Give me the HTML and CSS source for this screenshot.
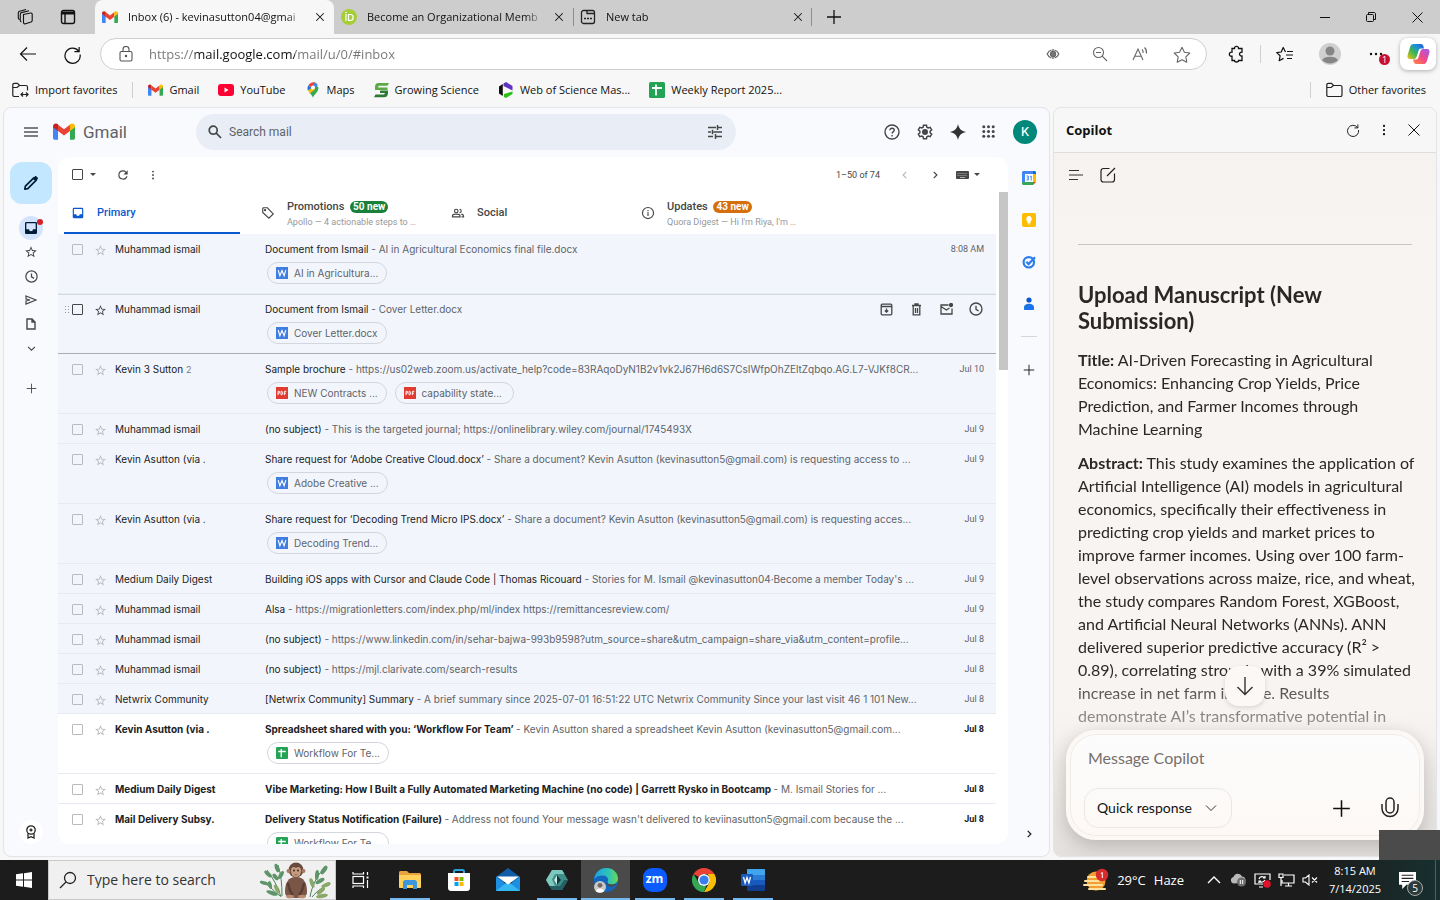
FILE: index.html
```
<!DOCTYPE html>
<html lang="en">
<head>
    <meta charset="UTF-8">
    <meta name="viewport" content="width=device-width, initial-scale=1.0">
    <title>Inbox (6) - Gmail</title>
    <link rel="stylesheet" href="styles.css">
</head>
<body>

    <!-- Shared icons -->
    <svg class="sprite" aria-hidden="true">
        <symbol id="i-gmail" viewBox="0 0 24 18">
            <path fill="#4285f4" d="M0 3v13.4C0 17.3.7 18 1.6 18h3.9V7.5z"/>
            <path fill="#34a853" d="M24 3v13.4c0 .9-.7 1.6-1.6 1.6h-3.9V7.5z"/>
            <path fill="#ea4335" d="M5.5 1.6 12 6.6l6.5-5v6.9L12 13.4 5.500 8.500z"/>
            <path fill="#c5221f" d="M0 3.500C0 .4 3.300-.6 5.500 1.200v7.300L0 4.300z"/>
            <path fill="#fbbc04" d="M24 3.500C24 .4 20.700-.6 18.500 1.200v7.300L24 4.300z"/>
        </symbol>
        <symbol id="i-close" viewBox="0 0 16 16"><path d="M3 3l10 10M13 3 3 13" fill="none" stroke="currentColor" stroke-width="1.4"/></symbol>
        <symbol id="i-plus" viewBox="0 0 16 16"><path d="M8 1v14M1 8h14" fill="none" stroke="currentColor" stroke-width="1.300"/></symbol>
        <symbol id="i-reload" viewBox="0 0 20 20"><path d="M16.500 6.500A8 8 0 1 0 18 10M17 2v5h-5" fill="none" stroke="currentColor" stroke-width="1.300"/></symbol>
        <symbol id="i-refresh" viewBox="0 0 24 24"><path fill="currentColor" d="M17.650 6.350A7.960 7.960 0 0 0 12 4a8 8 0 1 0 7.730 10h-2.080A6 6 0 1 1 12 6c1.660 0 3.140.69 4.220 1.780L13 11h7V4z"/></symbol>
        <symbol id="i-dots" viewBox="0 0 16 16"><g fill="currentColor"><circle cx="8" cy="2.500" r="1.500"/><circle cx="8" cy="8" r="1.500"/><circle cx="8" cy="13.500" r="1.500"/></g></symbol>
        <symbol id="i-star" viewBox="0 0 24 24"><path fill="currentColor" d="M22 9.240l-7.190-.62L12 2 9.190 8.630 2 9.240l5.460 4.730L5.820 21 12 17.270 18.180 21l-1.630-7.030zM12 15.400l-3.760 2.270 1-4.280-3.320-2.880 4.380-.38L12 6.100l1.710 4.040 4.380.38-3.320 2.880 1 4.280z"/></symbol>
        <symbol id="i-clock" viewBox="0 0 24 24"><path fill="none" stroke="currentColor" stroke-width="2" d="M12 3a9 9 0 1 0 0 18 9 9 0 0 0 0-18zM12 7v5.500l4 2.500"/></symbol>
        <symbol id="i-chev-r" viewBox="0 0 16 16"><path d="M6 3l5 5-5 5" fill="none" stroke="currentColor" stroke-width="2"/></symbol>
        <symbol id="i-chev-d" viewBox="0 0 16 16"><path d="M3 5.500l5 5 5-5" fill="none" stroke="currentColor" stroke-width="1.600"/></symbol>
        <symbol id="i-caret" viewBox="0 0 8 4"><path d="M0 0h8L4 4z" fill="currentColor"/></symbol>
        <symbol id="i-inbox" viewBox="0 0 24 24"><path fill="currentColor" d="M19 3H5a2 2 0 0 0-2 2v14c0 1.100.9 2 2 2h14a2 2 0 0 0 2-2V5a2 2 0 0 0-2-2zm0 11h-4a3 3 0 0 1-6 0H5V5h14z"/></symbol>
        <symbol id="i-word" viewBox="0 0 12 12"><path fill="#3f7de0" d="M0 0h12v12H0z"/><path fill="none" stroke="#fff" stroke-width="1.200" d="M2.200 3.200l1.700 5.600L6 3.600l2.100 5.200 1.700-5.600"/></symbol>
        <symbol id="i-pdf" viewBox="0 0 12 12"><path fill="#e03c31" d="M0 0h12v12H0z"/><path fill="none" stroke="#fff" stroke-width="0.900" d="M2 8.200V4.300h1.300v2H2M5 7.800V4.300h.9l.7.700v2l-.7.800zM8.400 8.200V4.300h2M8.400 6.200h1.600"/></symbol>
        <symbol id="i-sheet" viewBox="0 0 16 16"><rect width="16" height="16" rx="1.500" fill="#23a455"/><path d="M3 6h10M7 2.500v11" stroke="#fff" stroke-width="1.800"/></symbol>
    </svg>

    <!-- Tab strip -->
    <header class="tabs">
        <div class="tabs__tools">
            <button class="icon-btn" aria-label="Workspaces"><svg width="18" height="18" viewBox="0 0 18 18" fill="none" stroke="#111" stroke-width="1.100"><path d="M6.500 6.500l7-1.500c1-.2 1.700.4 1.700 1.300v6.200c0 .8-.4 1.200-1.200 1.500l-5.500 1.800c-1 .3-2-.2-2-1.200zM4.500 14c-.8-.2-1.200-.7-1.200-1.500V6.200c0-.8.500-1.300 1.300-1.600L12 2.800M2.500 11.500C1.800 11.300 1.300 10.800 1.300 10V4.800c0-.8.500-1.300 1.300-1.600L9 1.500"/></svg></button>
            <button class="icon-btn" aria-label="Tab actions"><svg width="16" height="16" viewBox="0 0 16 16" fill="none" stroke="#111" stroke-width="1.400"><rect x="1.500" y="1.500" width="13" height="13" rx="2"/><path d="M1.500 4h13" stroke-width="3"/><path d="M5 4v10"/></svg></button>
        </div>
        <div class="tab tab--active">
            <svg class="tab__icon" width="16" height="12"><use href="#i-gmail"/></svg>
            <span class="tab__title">Inbox (6) - kevinasutton04@gmai</span>
            <button class="icon-btn" aria-label="Close tab"><svg width="12" height="12"><use href="#i-close"/></svg></button>
        </div>
        <div class="tab">
            <svg class="tab__icon" width="16" height="16" viewBox="0 0 16 16"><circle cx="8" cy="8" r="8" fill="#a6ce39"/><path d="M5 5v7M7.500 5.500v6h1.700a3 3 0 0 0 0-6z" fill="none" stroke="#fff" stroke-width="1.200"/><circle cx="5" cy="3.500" r="0.800" fill="#fff"/></svg>
            <span class="tab__title">Become an Organizational Memb</span>
            <button class="icon-btn" aria-label="Close tab"><svg width="12" height="12"><use href="#i-close"/></svg></button>
        </div>
        <div class="tab tab--edged">
            <svg class="tab__icon" width="16" height="16" viewBox="0 0 16 16" fill="none" stroke="#222" stroke-width="1.300"><rect x="1.500" y="1.500" width="13" height="13" rx="2"/><path d="M7 1.500v3h7.500"/><path d="M4 9.500h2M7 9.500h2M10 9.500h2" stroke-width="1.600"/></svg>
            <span class="tab__title">New tab</span>
            <button class="icon-btn" aria-label="Close tab"><svg width="12" height="12"><use href="#i-close"/></svg></button>
        </div>
        <button class="icon-btn tabs__new" aria-label="New tab"><svg width="16" height="16"><use href="#i-plus"/></svg></button>
        <div class="window-controls">
            <button class="icon-btn" aria-label="Minimize"><svg width="12" height="12" viewBox="0 0 12 12" stroke="#111"><path d="M1 6.500h10"/></svg></button>
            <button class="icon-btn" aria-label="Restore"><svg width="12" height="12" viewBox="0 0 12 12" fill="none" stroke="#111"><rect x="1.500" y="3.500" width="7" height="7" rx="1"/><path d="M3.500 3V1.500H9c1 0 1.500.5 1.500 1.500v5.500H9"/></svg></button>
            <button class="icon-btn" aria-label="Close window"><svg width="13" height="13" viewBox="0 0 13 13" stroke="#111"><path d="M1.500 1.500l10 10M11.500 1.500l-10 10"/></svg></button>
        </div>
    </header>

    <!-- Address bar -->
    <div class="toolbar">
        <div class="toolbar__nav">
            <button class="icon-btn" aria-label="Back"><svg width="18" height="16" viewBox="0 0 18 16" fill="none" stroke="#111" stroke-width="1.200"><path d="M17 8H1.500M8 1.500L1.500 8 8 14.500"/></svg></button>
            <button class="icon-btn" aria-label="Reload"><svg width="19" height="19"><use href="#i-reload"/></svg></button>
        </div>
        <div class="address">
            <svg width="14" height="16" viewBox="0 0 14 16" fill="none" stroke="#555" stroke-width="1.100"><rect x="1" y="5.500" width="12" height="9.500" rx="1.500"/><path d="M4 5.500V3.500a3 3 0 0 1 6 0v2"/><circle cx="7" cy="10" r="0.700" fill="#555"/></svg>
            <input class="address__input" type="text" value="https://mail.google.com/mail/u/0/#inbox" aria-label="Address">
            <div class="address__actions">
                <button class="icon-btn" aria-label="Immersive view"><svg width="14" height="12" viewBox="0 0 14 12" fill="none" stroke="#666" stroke-width="1.200"><path d="M5.500 2C3.500 2.600 2 4 1.200 6c.8 2 2.300 3.400 4.300 4M8.500 2c2 .6 3.500 2 4.300 4-.8 2-2.300 3.400-4.300 4M7 1v10"/><circle cx="7" cy="6" r="2.600" fill="#777"/></svg></button>
                <button class="icon-btn" aria-label="Zoom out"><svg width="16" height="16" viewBox="0 0 16 16" fill="none" stroke="#666" stroke-width="1.100"><circle cx="6.500" cy="6.500" r="5"/><path d="M4 6.500h5M10.200 10.200L15 15"/></svg></button>
                <button class="icon-btn" aria-label="Read aloud"><svg width="17" height="16" viewBox="0 0 17 16" fill="none" stroke="#666" stroke-width="1.100"><path d="M1 14L6 3l5 11M2.800 10.300h6.400M10 3.500c1 1 1.300 2.200 1.100 3.500M12.500 1.500c1.700 1.600 2.300 3.600 2 6"/></svg></button>
                <button class="icon-btn" aria-label="Add to favorites"><svg width="18" height="17" viewBox="0 0 18 17" fill="none" stroke="#666" stroke-width="1.100" stroke-linejoin="round"><path d="M9 1.200l2.400 5 5.400.8-4 3.800 1 5.400L9 13.700l-4.800 2.500 1-5.400-4-3.800 5.400-.8z"/></svg></button>
            </div>
        </div>
        <div class="toolbar__right">
            <button class="icon-btn" aria-label="Extensions"><svg width="17" height="18" viewBox="0 0 17 18" fill="none" stroke="#111" stroke-width="1.300"><path d="M4 3.500h2.500C6 .6 11 .6 10.500 3.500H14v3.700c-3.300-.5-3.300 4.300 0 3.800v4.500h-3.500c.3 2-4.200 2-4 0H4V11.200c-3.600.5-3.600-4.500 0-4z"/></svg></button>
            <span class="sep"></span>
            <button class="icon-btn" aria-label="Favorites"><svg width="17" height="17" viewBox="0 0 17 17" fill="none" stroke="#111" stroke-width="1.200" stroke-linejoin="round"><path d="M9.500 6L7.200 1.500 5.200 6l-4.500.6 3.400 3.200-.9 4.900 4.300-2.300M11 5.500h6M10 9h7M11 12.500h5"/></svg></button>
            <button class="icon-btn profile" aria-label="Profile"><svg width="22" height="22" viewBox="0 0 22 22"><circle cx="11" cy="11" r="11" fill="#d0d0d0"/><circle cx="11" cy="8" r="4.500" fill="#858585"/><path fill="#858585" d="M3 17c2-4.500 14-4.500 16 0a11 11 0 0 1-16 0z"/></svg></button>
            <button class="icon-btn more" aria-label="Settings and more"><svg width="14" height="4" viewBox="0 0 14 4" fill="#111"><circle cx="2" cy="2" r="1.200"/><circle cx="7" cy="2" r="1.200"/><circle cx="12" cy="2" r="1.200"/></svg><span class="more__badge">1</span></button>
            <button class="icon-btn copilot-btn" aria-label="Copilot">
                <svg width="23" height="22" viewBox="0 0 23 22"><defs><linearGradient id="cpA" x1="0" y1="1" x2="1" y2="0"><stop offset="0" stop-color="#f4c21a"/><stop offset=".4" stop-color="#3fb54f"/><stop offset=".7" stop-color="#1890e0"/><stop offset="1" stop-color="#2a52c8"/></linearGradient><linearGradient id="cpB" x1="0" y1="1" x2="1" y2="0"><stop offset="0" stop-color="#ff8a3c"/><stop offset=".5" stop-color="#f0488b"/><stop offset="1" stop-color="#9b5cf0"/></linearGradient></defs><path fill="url(#cpA)" d="M6.500 1H14c1.500 0 2 1 2.400 2.200L17 5.500h-3c-1.500 0-2 .8-2.400 2L9.500 14c-.6 1.600-1.500 2-3 2H3c-2.300 0-3-2-2.300-4.300L3.200 3.800C3.800 1.900 4.800 1 6.500 1z"/><path fill="url(#cpB)" d="M16.500 21H9c-1.500 0-2-1-2.400-2.200L6 16.500h3c1.500 0 2-.8 2.400-2L13.500 8c.6-1.600 1.500-2 3-2H20c2.300 0 3 2 2.300 4.300l-2.500 7.900c-.6 1.900-1.600 2.800-3.300 2.800z"/></svg>
            </button>
        </div>
    </div>

    <!-- Favorites bar -->
    <nav class="favorites">
        <a class="fav" href="#"><svg width="17" height="16" viewBox="0 0 17 16" fill="none" stroke="#222" stroke-width="1.200"><path d="M7 14.500H2.500c-1 0-1.700-.6-1.700-1.600V3c0-1 .7-1.700 1.700-1.700h3L7.500 3.500h6.300c1 0 1.700.6 1.700 1.600v3.400M1 5.500h4l2.500-2M9 12.500h7M11 10.500l-2 2 2 2M14 10.500l2 2-2 2"/></svg>Import favorites</a>
        <span class="sep sep--short favorites__split"></span>
        <a class="fav" href="#"><svg width="15" height="12"><use href="#i-gmail"/></svg>Gmail</a>
        <a class="fav" href="#"><svg width="16" height="12" viewBox="0 0 16 12"><rect width="16" height="12" rx="3" fill="#f03"/><path fill="#fff" d="M6.500 3.500v5l4-2.500z"/></svg>YouTube</a>
        <a class="fav" href="#"><svg width="16" height="16" viewBox="0 0 16 16"><path fill="#34a853" d="M8 16c.6-3.500 5.500-5.500 5.500-10.500L11 3 4.500 10.500C6 12.500 7.500 14 8 16z"/><path fill="#fbbc04" d="M3 8l3-3.500 4 3-5.200 4C4 10.500 3.300 9.300 3 8z"/><path fill="#1a73e8" d="M3.500 3.200L6.500 6 2.800 8.500C2.200 6.500 2.400 4.600 3.500 3.200z"/><path fill="#ea4335" d="M3.500 3.200L7 6l3.500-5.500C8 -.5 5 .8 3.500 3.200z"/><path fill="#4285f4" d="M10 .4L7.500 4l3 2 2.400-3.200C12.200 1.600 11.200.8 10 .4z"/><circle cx="8" cy="5.500" r="2" fill="#fff"/></svg>Maps</a>
        <a class="fav" href="#"><svg width="15" height="16" viewBox="0 0 15 16"><path fill="#5ea845" d="M4.500 1H15l-1.500 2.800H5.800c-1.200 0-1.800.5-1.800 1.700h9.500V8H1V5c0-2.500 1.300-4 3.500-4z"/><path fill="#2c7a36" d="M6 8.500h8V11c0 2.700-1.500 4.300-4 4.300H0l1.500-2.700H9c1 0 1.700-.5 1.900-1.500H6z"/></svg>Growing Science</a>
        <a class="fav" href="#"><svg width="16" height="16" viewBox="0 0 16 16"><path fill="#111" d="M1 4.500L4.800 2v12L1 11.500z"/><path fill="#5e33bf" d="M5.500 1.500L8 0l6.500 4v4.500L5.500 4z"/><path fill="#27c215" d="M14.500 9.500V12L8 16l-2-1v-3z"/></svg>Web of Science Mas...</a>
        <a class="fav" href="#"><svg width="16" height="16"><use href="#i-sheet"/></svg>Weekly Report 2025...</a>
        <span class="sep sep--short favorites__push"></span>
        <a class="fav" href="#"><svg width="17" height="16" viewBox="0 0 17 16" fill="none" stroke="#222" stroke-width="1.200"><path d="M.8 3c0-1 .7-1.700 1.700-1.700h3L7.500 3.500h6.800c1 0 1.700.6 1.700 1.600v7.800c0 1-.7 1.600-1.700 1.600H2.500c-1 0-1.700-.6-1.700-1.600zM1 5.500h4l2.500-2"/></svg>Other favorites</a>
    </nav>

    <main class="content">

        <!-- Gmail -->
        <section class="gmail">
            <header class="gmail__header">
                <div class="brand">
                    <button class="icon-btn" aria-label="Main menu"><svg width="14" height="10" viewBox="0 0 14 10" stroke="#555" stroke-width="1.300"><path d="M0 1h14M0 5h14M0 9h14"/></svg></button>
                    <svg width="22" height="17"><use href="#i-gmail"/></svg>
                    <span class="brand__name">Gmail</span>
                </div>
                <label class="search">
                    <svg width="14" height="14" viewBox="0 0 14 14" fill="none" stroke="#444746" stroke-width="1.700"><circle cx="5.200" cy="5.200" r="4"/><path d="M8.200 8.200L13 13"/></svg>
                    <input class="search__input" type="text" placeholder="Search mail" aria-label="Search mail">
                    <svg width="14" height="14" viewBox="0 0 14 14" stroke="#444746" stroke-width="1.500"><path d="M0 2.500h8M10 2.500h4M9.500 0v5M0 7h3M5.500 7H14M4.500 4.700v4.600M0 11.500h5M8 11.500h6M7.500 9v5"/></svg>
                </label>
                <div class="gmail__apps">
                    <button class="icon-btn" aria-label="Support"><svg width="16" height="16" viewBox="0 0 16 16" fill="none" stroke="#444746" stroke-width="1.400"><circle cx="8" cy="8" r="7"/><path d="M5.900 6.300c0-2.800 4.300-2.700 4.300 0 0 1.500-2.100 1.700-2.100 3.200M8.100 11v1.400"/></svg></button>
                    <button class="icon-btn" aria-label="Settings"><svg width="18" height="18" viewBox="0 0 24 24" fill="none" stroke="#444746" stroke-width="2"><path d="M10 3h4l.5 2.700 1.800 1 2.600-.9 2 3.400-2.100 1.800v2l2.100 1.800-2 3.400-2.600-.9-1.800 1L14 21h-4l-.5-2.700-1.800-1-2.600.9-2-3.400L5.200 13v-2L3.100 9.200l2-3.400 2.600.9 1.800-1z"/><circle cx="12" cy="12" r="3" fill="#444746"/></svg></button>
                    <button class="icon-btn" aria-label="Gemini"><svg width="16" height="16" viewBox="0 0 16 16"><path fill="#333" d="M8 0c.8 4.500 3.500 7.200 8 8-4.500.8-7.200 3.500-8 8-.8-4.500-3.500-7.200-8-8 4.500-.8 7.200-3.500 8-8z"/></svg></button>
                    <button class="icon-btn" aria-label="Google apps"><svg width="13" height="13" viewBox="0 0 13 13" fill="#444746"><circle cx="1.800" cy="1.800" r="1.500"/><circle cx="6.500" cy="1.800" r="1.500"/><circle cx="11.200" cy="1.800" r="1.500"/><circle cx="1.800" cy="6.500" r="1.500"/><circle cx="6.500" cy="6.500" r="1.500"/><circle cx="11.200" cy="6.500" r="1.500"/><circle cx="1.800" cy="11.200" r="1.500"/><circle cx="6.500" cy="11.200" r="1.500"/><circle cx="11.200" cy="11.200" r="1.500"/></svg></button>
                    <button class="avatar" aria-label="Account">K</button>
                </div>
            </header>

            <div class="gmail__body">
                <nav class="rail">
                    <button class="compose" aria-label="Compose"><svg width="16" height="16" viewBox="0 0 16 16"><path fill="none" stroke="#001d35" stroke-width="1.700" stroke-linejoin="round" d="M1.800 14.200l.6-3L10.800 2.800l2.400 2.400-8.400 8.400z"/><path fill="#001d35" d="M9.800 3.500l2-2c.6-.6 1.100-.6 1.600-.1l1.200 1.200c.5.500.5 1 0 1.600l-2 2z"/></svg></button>
                    <a class="rail__item rail__item--active" href="#" aria-label="Inbox"><svg width="16" height="16"><use href="#i-inbox"/></svg><span class="rail__dot"></span></a>
                    <a class="rail__item" href="#" aria-label="Starred"><svg width="14" height="14"><use href="#i-star"/></svg></a>
                    <a class="rail__item" href="#" aria-label="Snoozed"><svg width="15" height="15"><use href="#i-clock"/></svg></a>
                    <a class="rail__item" href="#" aria-label="Sent"><svg width="12" height="10" viewBox="0 0 12 10" fill="none" stroke="currentColor" stroke-width="1.200"><path d="M1 1l10 4L1 9V6l4-1-4-1z"/></svg></a>
                    <a class="rail__item" href="#" aria-label="Drafts"><svg width="10" height="12" viewBox="0 0 10 12" fill="none" stroke="currentColor" stroke-width="1.400"><path d="M1 1h5l3 3v7H1zM6 1v3h3"/></svg></a>
                    <a class="rail__item" href="#" aria-label="More"><svg width="11" height="11"><use href="#i-chev-d"/></svg></a>
                    <a class="rail__item rail__item--add" href="#" aria-label="Create label"><svg width="11" height="11"><use href="#i-plus"/></svg></a>
                    <a class="rail__item rail__item--badge" href="#" aria-label="Upgrade"><svg width="12" height="14" viewBox="0 0 12 14" fill="none" stroke="#222" stroke-width="1.300"><circle cx="6" cy="5" r="4.200"/><path d="M3 8.500V13l3-1.300L9 13V8.500M4.500 5h3M6 3.500v3"/></svg></a>
                </nav>

                <div class="mailbox">
                    <div class="mailbox__bar">
                        <input class="check check--dark" type="checkbox" aria-label="Select all">
                        <svg class="mailbox__caret" width="6" height="3"><use href="#i-caret"/></svg>
                        <button class="icon-btn" aria-label="Refresh"><svg width="14" height="14"><use href="#i-refresh"/></svg></button>
                        <button class="icon-btn" aria-label="More options"><svg width="10" height="10"><use href="#i-dots"/></svg></button>
                        <div class="pager">
                            <span>1–50 of 74</span>
                            <button class="icon-btn pager__prev" aria-label="Newer" disabled><svg width="10" height="10"><use href="#i-chev-r"/></svg></button>
                            <button class="icon-btn" aria-label="Older"><svg width="10" height="10"><use href="#i-chev-r"/></svg></button>
                            <button class="icon-btn pager__kbd" aria-label="Input tools"><svg width="13" height="8" viewBox="0 0 13 8"><rect width="13" height="8" rx="1" fill="#444746"/><path d="M1.500 2.500h10M1.500 4.500h10" stroke="#ccc" stroke-width="0.800" stroke-dasharray="1 1"/><path d="M4 6.500h5" stroke="#ccc" stroke-width="0.800"/></svg><svg width="6" height="3"><use href="#i-caret"/></svg></button>
                        </div>
                    </div>

                    <div class="mailbox__scroll">
                        <div class="mailbox__list">
                            <div class="categories">
                                <button class="category category--active">
                                    <svg width="14" height="14"><use href="#i-inbox"/></svg>
                                    <span class="category__name">Primary</span>
                                </button>
                                <button class="category">
                                    <svg width="14" height="14" viewBox="0 0 24 24" fill="none" stroke="currentColor" stroke-width="2"><path d="M3 4.500V11l10.500 10L21 13.500 11 3H4.500C3.700 3 3 3.700 3 4.500z"/><circle cx="7" cy="7" r="1" fill="currentColor"/></svg>
                                    <span class="category__text">
                                        <span class="category__name">Promotions <span class="pill pill--green">50 new</span></span>
                                        <span class="category__sub">Apollo — 4 actionable steps to …</span>
                                    </span>
                                </button>
                                <button class="category">
                                    <svg width="14" height="14" viewBox="0 0 24 24" fill="none" stroke="currentColor" stroke-width="2"><circle cx="9" cy="8.500" r="3"/><path d="M2.500 18.500v-1.500c0-4 13-4 13 0v1.500zM14.500 5.500a3 3 0 0 1 0 6M17.500 14c2.500.5 4 1.500 4 3v1.500H18"/></svg>
                                    <span class="category__name">Social</span>
                                </button>
                                <button class="category">
                                    <svg width="14" height="14" viewBox="0 0 24 24" fill="none" stroke="currentColor" stroke-width="2"><circle cx="12" cy="12" r="9.500"/><path d="M12 10.500V17M12 7v2"/></svg>
                                    <span class="category__text">
                                        <span class="category__name">Updates <span class="pill pill--orange">43 new</span></span>
                                        <span class="category__sub">Quora Digest — Hi I'm Riya, I'm …</span>
                                    </span>
                                </button>
                            </div>

                            <table class="mails">
                                <colgroup><col class="mails__check"><col class="mails__star"><col class="mails__from"><col><col class="mails__date"></colgroup>
                                <tbody>
                                    <tr class="mail mail--tall">
                                        <td><input class="check" type="checkbox" aria-label="Select"></td>
                                        <td><button class="star" aria-label="Star"><svg width="13" height="13"><use href="#i-star"/></svg></button></td>
                                        <td>Muhammad ismail</td>
                                        <td><div class="mail__line">Document from Ismail <span>- AI in Agricultural Economics final file.docx</span></div>
                                            <a class="chip" href="#"><svg width="12" height="12"><use href="#i-word"/></svg>AI in Agricultura...</a></td>
                                        <td>8:08 AM</td>
                                    </tr>
                                    <tr class="mail mail--tall mail--hover">
                                        <td><span class="grip"></span><input class="check check--dark" type="checkbox" aria-label="Select"></td>
                                        <td><button class="star" aria-label="Star"><svg width="13" height="13"><use href="#i-star"/></svg></button></td>
                                        <td>Muhammad ismail</td>
                                        <td colspan="2">
                                            <div class="mail__split">
                                                <div class="mail__line">Document from Ismail <span>- Cover Letter.docx</span></div>
                                                <div class="mail__actions">
                                                    <button class="icon-btn" aria-label="Archive"><svg width="13" height="13" viewBox="0 0 13 13" fill="none" stroke="currentColor" stroke-width="1.300"><rect x="1.200" y="1.200" width="10.600" height="10.600" rx="1"/><path d="M1 3.500h11M6.500 5.500V9M4.800 7.500l1.700 1.700 1.700-1.700"/></svg></button>
                                                    <button class="icon-btn" aria-label="Delete"><svg width="11" height="13" viewBox="0 0 11 13" fill="none" stroke="currentColor" stroke-width="1.300"><path d="M1 2.500h9M4 2V1h3v1M2.200 3v8.800h6.600V3M4.500 5v5M6.500 5v5"/></svg></button>
                                                    <button class="icon-btn" aria-label="Mark as unread"><svg width="13" height="12" viewBox="0 0 13 12" fill="none" stroke="currentColor" stroke-width="1.300"><path d="M8.500 2H1v9h11V5.500M1 3.500l5.500 3.500 3-2"/><circle cx="11" cy="2" r="1.500" fill="currentColor"/></svg></button>
                                                    <button class="icon-btn" aria-label="Snooze"><svg width="16" height="16"><use href="#i-clock"/></svg></button>
                                                </div>
                                            </div>
                                            <a class="chip" href="#"><svg width="12" height="12"><use href="#i-word"/></svg>Cover Letter.docx</a>
                                        </td>
                                    </tr>
                                    <tr class="mail mail--tall">
                                        <td><input class="check" type="checkbox" aria-label="Select"></td>
                                        <td><button class="star" aria-label="Star"><svg width="13" height="13"><use href="#i-star"/></svg></button></td>
                                        <td>Kevin 3 Sutton <small>2</small></td>
                                        <td><div class="mail__line">Sample brochure <span>- https://us02web.zoom.us/activate_help?code=83RAqoDyN1B2v1vk2J67H6d6S7CsIWfpOhZEltZqbqo.AG.L7-VJKf8CR...</span></div>
                                            <a class="chip" href="#"><svg width="12" height="12"><use href="#i-pdf"/></svg>NEW Contracts ...</a>
                                            <a class="chip" href="#"><svg width="12" height="12"><use href="#i-pdf"/></svg>capability state...</a></td>
                                        <td>Jul 10</td>
                                    </tr>
                                    <tr class="mail">
                                        <td><input class="check" type="checkbox" aria-label="Select"></td>
                                        <td><button class="star" aria-label="Star"><svg width="13" height="13"><use href="#i-star"/></svg></button></td>
                                        <td>Muhammad ismail</td>
                                        <td><div class="mail__line">(no subject) <span>- This is the targeted journal; https://onlinelibrary.wiley.com/journal/1745493X</span></div></td>
                                        <td>Jul 9</td>
                                    </tr>
                                    <tr class="mail mail--tall">
                                        <td><input class="check" type="checkbox" aria-label="Select"></td>
                                        <td><button class="star" aria-label="Star"><svg width="13" height="13"><use href="#i-star"/></svg></button></td>
                                        <td>Kevin Asutton (via .</td>
                                        <td><div class="mail__line">Share request for ‘Adobe Creative Cloud.docx’ <span>- Share a document? Kevin Asutton (kevinasutton5@gmail.com) is requesting access to ...</span></div>
                                            <a class="chip" href="#"><svg width="12" height="12"><use href="#i-word"/></svg>Adobe Creative ...</a></td>
                                        <td>Jul 9</td>
                                    </tr>
                                    <tr class="mail mail--tall">
                                        <td><input class="check" type="checkbox" aria-label="Select"></td>
                                        <td><button class="star" aria-label="Star"><svg width="13" height="13"><use href="#i-star"/></svg></button></td>
                                        <td>Kevin Asutton (via .</td>
                                        <td><div class="mail__line">Share request for ‘Decoding Trend Micro IPS.docx’ <span>- Share a document? Kevin Asutton (kevinasutton5@gmail.com) is requesting acces...</span></div>
                                            <a class="chip" href="#"><svg width="12" height="12"><use href="#i-word"/></svg>Decoding Trend...</a></td>
                                        <td>Jul 9</td>
                                    </tr>
                                    <tr class="mail">
                                        <td><input class="check" type="checkbox" aria-label="Select"></td>
                                        <td><button class="star" aria-label="Star"><svg width="13" height="13"><use href="#i-star"/></svg></button></td>
                                        <td>Medium Daily Digest</td>
                                        <td><div class="mail__line">Building iOS apps with Cursor and Claude Code | Thomas Ricouard <span>- Stories for M. Ismail @kevinasutton04·Become a member Today's ...</span></div></td>
                                        <td>Jul 9</td>
                                    </tr>
                                    <tr class="mail">
                                        <td><input class="check" type="checkbox" aria-label="Select"></td>
                                        <td><button class="star" aria-label="Star"><svg width="13" height="13"><use href="#i-star"/></svg></button></td>
                                        <td>Muhammad ismail</td>
                                        <td><div class="mail__line">Alsa <span>- https://migrationletters.com/index.php/ml/index https://remittancesreview.com/</span></div></td>
                                        <td>Jul 9</td>
                                    </tr>
                                    <tr class="mail">
                                        <td><input class="check" type="checkbox" aria-label="Select"></td>
                                        <td><button class="star" aria-label="Star"><svg width="13" height="13"><use href="#i-star"/></svg></button></td>
                                        <td>Muhammad ismail</td>
                                        <td><div class="mail__line">(no subject) <span>- https://www.linkedin.com/in/sehar-bajwa-993b9598?utm_source=share&amp;utm_campaign=share_via&amp;utm_content=profile...</span></div></td>
                                        <td>Jul 8</td>
                                    </tr>
                                    <tr class="mail">
                                        <td><input class="check" type="checkbox" aria-label="Select"></td>
                                        <td><button class="star" aria-label="Star"><svg width="13" height="13"><use href="#i-star"/></svg></button></td>
                                        <td>Muhammad ismail</td>
                                        <td><div class="mail__line">(no subject) <span>- https://mjl.clarivate.com/search-results</span></div></td>
                                        <td>Jul 8</td>
                                    </tr>
                                    <tr class="mail">
                                        <td><input class="check" type="checkbox" aria-label="Select"></td>
                                        <td><button class="star" aria-label="Star"><svg width="13" height="13"><use href="#i-star"/></svg></button></td>
                                        <td>Netwrix Community</td>
                                        <td><div class="mail__line">[Netwrix Community] Summary <span>- A brief summary since 2025-07-01 16:51:22 UTC Netwrix Community Since your last visit 46 1 101 New...</span></div></td>
                                        <td>Jul 8</td>
                                    </tr>
                                    <tr class="mail mail--tall mail--unread">
                                        <td><input class="check" type="checkbox" aria-label="Select"></td>
                                        <td><button class="star" aria-label="Star"><svg width="13" height="13"><use href="#i-star"/></svg></button></td>
                                        <td>Kevin Asutton (via .</td>
                                        <td><div class="mail__line">Spreadsheet shared with you: ‘Workflow For Team’ <span>- Kevin Asutton shared a spreadsheet Kevin Asutton (kevinasutton5@gmail.com...</span></div>
                                            <a class="chip" href="#"><svg width="12" height="12"><use href="#i-sheet"/></svg>Workflow For Te...</a></td>
                                        <td>Jul 8</td>
                                    </tr>
                                    <tr class="mail mail--unread">
                                        <td><input class="check" type="checkbox" aria-label="Select"></td>
                                        <td><button class="star" aria-label="Star"><svg width="13" height="13"><use href="#i-star"/></svg></button></td>
                                        <td>Medium Daily Digest</td>
                                        <td><div class="mail__line">Vibe Marketing: How I Built a Fully Automated Marketing Machine (no code) | Garrett Rysko in Bootcamp <span>- M. Ismail Stories for ...</span></div></td>
                                        <td>Jul 8</td>
                                    </tr>
                                    <tr class="mail mail--tall mail--unread">
                                        <td><input class="check" type="checkbox" aria-label="Select"></td>
                                        <td><button class="star" aria-label="Star"><svg width="13" height="13"><use href="#i-star"/></svg></button></td>
                                        <td>Mail Delivery Subsy.</td>
                                        <td><div class="mail__line">Delivery Status Notification (Failure) <span>- Address not found Your message wasn't delivered to keviinasutton5@gmail.com because the ...</span></div>
                                            <a class="chip" href="#"><svg width="12" height="12"><use href="#i-sheet"/></svg>Workflow For Te...</a></td>
                                        <td>Jul 8</td>
                                    </tr>
                                </tbody>
                            </table>
                        </div>
                        <div class="scrollbar"><div class="scrollbar__thumb"></div></div>
                    </div>
                </div>

                <aside class="addons">
                    <button class="addons__item" aria-label="Calendar"><svg width="14" height="14" viewBox="0 0 14 14"><path fill="#4285f4" d="M0 1.500C0 .7.700 0 1.500 0H11v3H3v8H0z"/><path fill="#1967d2" d="M11 0h1.500c.8 0 1.500.7 1.500 1.500V3h-3z"/><path fill="#fbbc04" d="M11 3h3v8h-3z"/><path fill="#34a853" d="M0 11h11v3H1.500C.7 14 0 13.300 0 12.500z"/><path fill="#ea4335" d="M11 11h3l-3 3z"/><path fill="#fff" d="M3 3h8v8H3z"/><path stroke="#4285f4" fill="none" d="M4.500 5h1.800v4H4.500M4.800 7h1.500M8 5.500l1.200-.5v4.500"/></svg></button>
                    <button class="addons__item" aria-label="Keep"><svg width="14" height="14" viewBox="0 0 14 14"><rect width="14" height="14" rx="2" fill="#fbbc04"/><path fill="#fff" d="M7 3a3 3 0 0 0-1.500 5.500V10h3V8.500A3 3 0 0 0 7 3zM5.700 10.500h2.600v.8H5.700z"/></svg></button>
                    <button class="addons__item" aria-label="Tasks"><svg width="14" height="14" viewBox="0 0 14 14" fill="none"><circle cx="6.800" cy="7.300" r="5.200" stroke="#2b7de9" stroke-width="2.200"/><path stroke="#2b7de9" stroke-width="2.200" d="M4.300 6.800l2.300 2.300L13 2.300"/></svg></button>
                    <button class="addons__item" aria-label="Contacts"><svg width="12" height="14" viewBox="0 0 12 14"><circle cx="6" cy="3" r="2.600" fill="#0b57d0"/><path fill="#1a73e8" d="M1 10.500C1 5.500 11 5.500 11 10.500V12c0 .6-.4 1-1 1H2c-.6 0-1-.4-1-1z"/></svg></button>
                    <span class="addons__line"></span>
                    <button class="addons__item" aria-label="Get add-ons"><svg width="12" height="12"><use href="#i-plus"/></svg></button>
                    <button class="addons__item addons__item--end" aria-label="Hide side panel"><svg width="10" height="10"><use href="#i-chev-r"/></svg></button>
                </aside>
            </div>
        </section>

        <!-- Copilot side pane -->
        <aside class="copilot">
            <header class="copilot__header">
                <h1 class="copilot__title">Copilot</h1>
                <button class="icon-btn" aria-label="Refresh"><svg width="14" height="14"><use href="#i-reload"/></svg></button>
                <button class="icon-btn" aria-label="More"><svg width="12" height="12"><use href="#i-dots"/></svg></button>
                <button class="icon-btn" aria-label="Close pane"><svg width="12" height="12" viewBox="0 0 12 12" stroke="#111"><path d="M.5.5l11 11M11.500.5l-11 11"/></svg></button>
            </header>
            <div class="copilot__body">
                <div class="copilot__tools">
                    <button class="icon-btn" aria-label="History"><svg width="14" height="10" viewBox="0 0 14 10" stroke="#333"><path d="M0 .5h10M0 5h14M0 9.500h9"/></svg></button>
                    <button class="icon-btn" aria-label="New chat"><svg width="16" height="16" viewBox="0 0 16 16" fill="none" stroke="#222" stroke-width="1.200"><path d="M9.500 1.500H3.500c-1.500 0-2.500 1-2.500 2.500v8.500C1 14 2 15 3.500 15H12c1.500 0 2.500-1 2.500-2.500V6.500M7 9l8-8"/></svg></button>
                </div>
                <article class="chat">
                    <hr>
                    <h2>Upload Manuscript (New Submission)</h2>
                    <p><strong>Title:</strong> AI-Driven Forecasting in Agricultural<br>
                        Economics: Enhancing Crop Yields, Price<br>
                        Prediction, and Farmer Incomes through<br>
                        Machine Learning</p>
                    <p><strong>Abstract:</strong> This study examines the application of<br>
                        Artificial Intelligence (AI) models in agricultural<br>
                        economics, specifically their effectiveness in<br>
                        predicting crop yields and market prices to<br>
                        improve farmer incomes. Using over 100 farm-<br>
                        level observations across maize, rice, and wheat,<br>
                        the study compares Random Forest, XGBoost,<br>
                        and Artificial Neural Networks (ANNs). ANN<br>
                        delivered superior predictive accuracy (R² &gt;<br>
                        0.89), correlating strongly with a 39% simulated<br>
                        increase in net farm income. Results<br>
                        demonstrate AI’s transformative potential in</p>
                </article>
                <button class="jump" aria-label="Scroll to bottom"><svg width="18" height="20" viewBox="0 0 18 20" fill="none" stroke="#333" stroke-width="1.400"><path d="M9 1v17M1.500 11L9 18.500 16.500 11"/></svg></button>
                <form class="composer">
                    <textarea class="composer__text" rows="1" placeholder="Message Copilot" aria-label="Message Copilot"></textarea>
                    <div class="composer__row">
                        <div class="mode">
                            <select class="mode__select" aria-label="Response mode"><option>Quick response</option></select>
                            <svg width="14" height="14" viewBox="0 0 14 14" fill="none" stroke="#333"><path d="M2 4.500l5 5 5-5"/></svg>
                        </div>
                        <button class="icon-btn composer__add" type="button" aria-label="Add"><svg width="19" height="19"><use href="#i-plus"/></svg></button>
                        <button class="icon-btn" type="button" aria-label="Talk"><svg width="20" height="22" viewBox="0 0 20 22" fill="none" stroke="#222" stroke-width="1.500"><rect x="6" y="1" width="8" height="15" rx="4"/><path d="M2 7v4.500c0 4.500 3.500 8 8 8s8-3.500 8-8V7"/></svg></button>
                    </div>
                </form>
            </div>
        </aside>
        <div class="toast-corner"></div>
    </main>

    <!-- Windows taskbar -->
    <footer class="taskbar">
        <button class="task task--start" aria-label="Start"><svg width="16" height="16" viewBox="0 0 16 16" fill="#fff"><path d="M0 2.200L7 1.300V7.500H0zM8 1.200L16 0v7.500H8zM0 8.500h7v6.200L0 13.800zM8 8.500h8V16l-8-1.200z"/></svg></button>
        <label class="task-search">
            <svg width="18" height="18" viewBox="0 0 18 18" fill="none" stroke="#222" stroke-width="1.300"><circle cx="11" cy="7" r="5.500"/><path d="M7 11l-6 6"/></svg>
            <input class="task-search__input" type="text" placeholder="Type here to search" aria-label="Type here to search">
            <svg width="72" height="38" viewBox="0 0 72 38">
                <g fill="none" stroke="#4f7f5a" stroke-width="1"><path d="M21 36C18 26 13 17 7 9M20 35C12 28 7 23 1 20M22 35c0-12-1-22-4-31"/><path d="M50 36c2-12 8-23 16-31M52 36c5-6 12-11 18-13"/></g>
                <g fill="#5d9468">
                    <ellipse cx="17" cy="7" rx="2" ry="4.500" transform="rotate(-20 17 7)"/><ellipse cx="21" cy="14" rx="2" ry="4.500" transform="rotate(30 21 14)"/><ellipse cx="15.500" cy="16" rx="2" ry="4" transform="rotate(-40 15.500 16)"/><ellipse cx="8" cy="13" rx="2" ry="4.500" transform="rotate(-50 8 13)"/><ellipse cx="4" cy="22" rx="1.700" ry="4.500" transform="rotate(-75 4 22)"/><ellipse cx="10" cy="24" rx="1.800" ry="4" transform="rotate(-15 10 24)"/><ellipse cx="12" cy="32" rx="2" ry="6" transform="rotate(-70 12 32)"/>
                    <ellipse cx="64" cy="9" rx="2.200" ry="5" transform="rotate(35 64 9)"/><ellipse cx="57" cy="14" rx="2" ry="5" transform="rotate(5 57 14)"/><ellipse cx="60" cy="20" rx="2" ry="5" transform="rotate(60 60 20)"/>
                </g>
                <g fill="#8aa86a"><ellipse cx="52" cy="22" rx="2" ry="5" transform="rotate(-20 52 22)"/><ellipse cx="66" cy="24" rx="2" ry="5" transform="rotate(65 66 24)"/><ellipse cx="61" cy="30" rx="2" ry="5" transform="rotate(50 61 30)"/><ellipse cx="62" cy="35" rx="2" ry="6" transform="rotate(80 62 35)"/><ellipse cx="17" cy="28" rx="2" ry="5" transform="rotate(-30 17 28)"/></g>
                <path fill="#7a5647" d="M25 31c0-9 3-15 11-15s11 6 11 15c0 4-3 6-11 6s-11-2-11-6z"/>
                <circle cx="36" cy="9" r="7.500" fill="#6b4a3e"/>
                <circle cx="28.500" cy="10" r="2" fill="#a87a63"/><circle cx="43.500" cy="10" r="2" fill="#a87a63"/>
                <path fill="#c79b7f" d="M31 9c0-3 3-4 5-2 2-2 5-1 5 2 0 5-2 7-5 7s-5-2-5-7z"/>
                <circle cx="34" cy="9.500" r="0.900" fill="#222"/><circle cx="38" cy="9.500" r="0.900" fill="#222"/><path d="M34.800 13.500c.8.600 1.600.6 2.400 0" stroke="#6b4030" fill="none" stroke-width="0.800"/>
                <path d="M28 22c1 6 3 10 5 12M44 22c-1 6-3 10-5 12" fill="none" stroke="#5a3d33" stroke-width="2.500"/>
                <ellipse cx="30" cy="35.500" rx="4" ry="1.800" fill="#b98a70"/><ellipse cx="42" cy="35.500" rx="4" ry="1.800" fill="#b98a70"/>
            </svg>
        </label>
        <button class="task" aria-label="Task view"><svg width="18" height="16" viewBox="0 0 18 16" fill="none" stroke="#fff" stroke-width="1.200"><path d="M1 0v2h10.500V0M1 16v-2h10.500v2M15.500 0v3M15.500 8v8"/><rect x="1" y="4.500" width="10.500" height="7"/><path d="M14.500 5.500h2" stroke-width="2"/></svg></button>
        <button class="task task--open" aria-label="File Explorer"><svg width="22" height="20" viewBox="0 0 22 20"><path fill="#e8a33d" d="M0 2.500C0 1.700.700 1 1.500 1H8l2 2h10.500c.8 0 1.500.700 1.500 1.500V8H0z"/><path fill="#ffd25e" d="M0 5h22v12c0 .6-.4 1-1 1H1c-.6 0-1-.4-1-1z"/><path fill="#3a96dd" d="M4 19v-6.500C4 11 5 10 6.500 10h9c1.500 0 2.500 1 2.500 2.500V19h-4v-4H8v4z"/></svg></button>
        <button class="task" aria-label="Store"><svg width="24" height="24" viewBox="0 0 24 24"><path d="M7 6V3.500C7 2.500 7.500 2 8.500 2h7c1 0 1.500.500 1.500 1.500V6" fill="none" stroke="#2aa3e0" stroke-width="2"/><path fill="#fff" d="M1 5h22v15c0 1.700-1.300 3-3 3H4c-1.700 0-3-1.300-3-3z"/><path fill="#f25022" d="M7.500 9h4v4h-4z"/><path fill="#7fba00" d="M12.500 9h4v4h-4z"/><path fill="#00a4ef" d="M7.500 14h4v4h-4z"/><path fill="#ffb900" d="M12.500 14h4v4h-4z"/></svg></button>
        <button class="task" aria-label="Mail"><svg width="24" height="24" viewBox="0 0 24 24"><path fill="#0f5fa8" d="M0 9L12 0l12 9v5H0z"/><path fill="#1e8fe0" d="M0 8.500l12 9 12-9V23H0z"/><path fill="#35b8f1" d="M0 23l12-9.500L24 23z"/><path fill="#fff" d="M1 8.500h22L12 16.500z"/></svg></button>
        <button class="task task--open" aria-label="Assistant"><svg width="24" height="24" viewBox="0 0 24 24"><path fill="#3f8f8c" d="M7 2h10l6 10-6 10H7L1 12z"/><path fill="#7ec9bd" d="M7 2h10l2.500 4H10l-3 5.500L10 18H4.600L1 12z"/><path fill="#245f63" d="M7 22h10l6-10h-4l-4 6H4.600z"/><path fill="#12373c" d="M12 7l4 5-4 5-3-5z"/><path fill="#cdeee6" d="M12 7l-3 5 3 5z"/></svg></button>
        <button class="task task--open task--active" aria-label="Edge"><svg width="26" height="26" viewBox="0 0 26 26"><defs><linearGradient id="edA" x1="0" y1="0" x2="1" y2="0"><stop offset="0" stop-color="#1f9fe0"/><stop offset=".6" stop-color="#2ec4b6"/><stop offset="1" stop-color="#66d855"/></linearGradient></defs><circle cx="13" cy="13" r="12" fill="#1266c0"/><path fill="url(#edA)" d="M1 12.500C2 5.500 7 1 13.500 1 20 1 25 6 25 11.500c0 4-3 6-6.500 6-3 0-4.500-1.300-4-2.500 1.500-2.500 0-6.500-4.500-6.500S2.500 10 1 12.500z"/><path fill="#4a4a4a" d="M14.500 15c-.5 1.200 1 2.500 4 2.500 2 0 3.800-.6 5-1.800-.8 2.500-3 4-5.500 4-4 0-6-4-3.500-4.700z"/><circle cx="7" cy="20" r="6" fill="#c9c9c9"/><circle cx="7" cy="18.300" r="2.400" fill="#74675f"/><path fill="#fff" d="M3 24c.8-3.500 7.200-3.500 8 0a6 6 0 0 1-8 0z"/></svg></button>
        <button class="task task--open" aria-label="Zoom"><span class="zoom-logo">zm</span></button>
        <button class="task task--open" aria-label="Chrome"><svg width="24" height="24" viewBox="0 0 24 24"><path fill="#ea4335" d="M1.600 6A12 12 0 0 1 22.400 6H12a6 6 0 0 0-5.200 3z"/><path fill="#fbbc04" d="M22.400 6A12 12 0 0 1 12 24l5.200-9A6 6 0 0 0 17.200 9L15.500 6z"/><path fill="#34a853" d="M12 24A12 12 0 0 1 1.600 6l5.200 9a6 6 0 0 0 7.500 2.600z"/><circle cx="12" cy="12" r="6" fill="#fff"/><circle cx="12" cy="12" r="4.600" fill="#3b7ded"/></svg></button>
        <button class="task task--open" aria-label="Word"><svg width="24" height="22" viewBox="0 0 24 22"><path fill="#41a5ee" d="M7 0h16c.6 0 1 .4 1 1v5H6V1c0-.6.400-1 1-1z"/><path fill="#2b7cd3" d="M6 6h18v5H6z"/><path fill="#185abd" d="M6 11h18v5H6z"/><path fill="#103f91" d="M6 16h18v5c0 .6-.4 1-1 1H7c-.6 0-1-.4-1-1z"/><rect y="5" width="12" height="12" rx="1" fill="#185abd"/><path d="M2.500 8l1.600 6L6 8.500 7.900 14l1.600-6" fill="none" stroke="#fff" stroke-width="1.300"/></svg></button>

        <div class="tray">
            <button class="weather"><svg width="26" height="24" viewBox="0 0 26 24"><circle cx="13" cy="13" r="9.500" fill="#f0a030"/><path d="M5 9h10M2 13h14M1 17h18M6 21h16" stroke="#ffe1a0" stroke-width="2" stroke-linecap="round"/><circle cx="19" cy="7" r="6.200" fill="#d92b2b"/><path d="M17.800 5.500l1.500-1v5.500" fill="none" stroke="#fff"/></svg><span>29°C</span><span>Haze</span></button>
            <button class="tray__icon" aria-label="Hidden icons"><svg width="14" height="8" viewBox="0 0 14 8" fill="none" stroke="#fff" stroke-width="1.400"><path d="M1 7l6-6 6 6"/></svg></button>
            <button class="tray__icon" aria-label="OneDrive"><svg width="17" height="14" viewBox="0 0 17 14"><path fill="#b9b9b9" d="M4 10.500a3.300 3.300 0 0 1-.5-6.500A4.500 4.500 0 0 1 12 3.500a3.500 3.500 0 0 1 2.500 6z"/><circle cx="11.500" cy="9" r="4.500" fill="#6d6d6d"/><path d="M10.300 7v4M12.700 7v4" stroke="#fff"/></svg></button>
            <button class="tray__icon" aria-label="Sync"><svg width="17" height="16" viewBox="0 0 17 16" fill="none" stroke="#fff" stroke-width="1.200"><path d="M9 12H1V2h15v6M5 15h4"/><path d="M5 7c1-3 4-3 6-1M11 4v2H9M11 8c-1 2-4 3-6 1M5 11V9h2"/><circle cx="13" cy="12" r="3.800" fill="#e0122b" stroke="none"/></svg></button>
            <button class="tray__icon" aria-label="Network"><svg width="17" height="14" viewBox="0 0 17 14" fill="none" stroke="#fff" stroke-width="1.200"><path d="M6 2h10v8H4V7M7 13h7M10.500 10v3"/><path d="M1 1h4v3.500H1zM3 4.500V13"/></svg></button>
            <button class="tray__icon" aria-label="Volume"><svg width="16" height="12" viewBox="0 0 16 12" fill="none" stroke="#fff" stroke-width="1.100"><path d="M1 4h2.500L7 1v10L3.500 8H1zM10 3.500l5 5M15 3.500l-5 5"/></svg></button>
            <time class="clock">8:15 AM<br>7/14/2025</time>
            <button class="notify" aria-label="Notifications"><svg width="17" height="17" viewBox="0 0 16 16"><path fill="#fff" d="M0 0h16v12H7l-4 4v-4H0z"/><path d="M2.500 3h11M2.500 6h11M2.500 9h7" stroke="#222"/></svg><span class="notify__count">5</span></button>
        </div>
    </footer>

</body>
</html>
```
FILE: styles.css
```
* {
    margin: 0;
    padding: 0;
    box-sizing: border-box;
}

body {
    height: 100vh;
    display: flex;
    flex-direction: column;
    overflow: hidden;
    background: #f7f7f7;
    color: #111;
    font: 11px/16px "Open Sans", "Noto Sans", sans-serif;
}

button, input, select, textarea {
    font: inherit;
    color: inherit;
    background: none;
    border: none;
    outline: none;
}

a {
    color: inherit;
    text-decoration: none;
}

svg {
    display: block;
    flex: none;
}

.sprite {
    position: absolute;
    width: 0;
    height: 0;
}

.icon-btn {
    display: flex;
    align-items: center;
    justify-content: center;
    flex: none;
}

.sep {
    width: 1px;
    height: 18px;
    background: #d0d0d0;
}

/* Tab strip */
.tabs {
    display: flex;
    flex: none;
    height: 34px;
    background: #cdcdcd;
}

.tabs__tools {
    display: flex;
    width: 95px;
    padding-left: 5px;
}

.tabs__tools .icon-btn {
    width: 42px;
}

.tab {
    display: flex;
    align-items: center;
    flex: 0 1 239px;
    min-width: 0;
    padding: 0 8px 0 7px;
    gap: 10px;
}

.tab--active {
    background: #f7f7f7;
    border-radius: 8px 8px 0 0;
}

.tab--edged {
    position: relative;
}

.tab--edged::before, .tab--edged::after {
    content: "";
    position: absolute;
    top: 8px;
    left: 0;
    width: 1px;
    height: 18px;
    background: #8d8d8d;
}

.tab--edged::after {
    left: auto;
    right: 0;
}

.tab__title {
    flex: 1;
    overflow: hidden;
    white-space: nowrap;
    -webkit-mask-image: linear-gradient(to right, #000 90%, transparent);
    mask-image: linear-gradient(to right, #000 90%, transparent);
}

.tabs__new {
    width: 44px;
}

.window-controls {
    display: flex;
    margin-left: auto;
}

.window-controls .icon-btn {
    width: 46px;
}

/* Address bar */
.toolbar {
    display: flex;
    align-items: center;
    flex: none;
    height: 40px;
    padding-right: 4px;
}

.toolbar__nav {
    display: flex;
    width: 100px;
    padding-left: 6px;
}

.toolbar__nav .icon-btn {
    width: 44px;
}

.address {
    display: flex;
    align-items: center;
    flex: 1;
    height: 32px;
    padding: 0 15px 0 18px;
    gap: 16px;
    border: 1px solid #cfcfcf;
    border-radius: 16px;
    background: #fff;
}

/* the host is darker than the rest of the URL */
.address__input {
    flex: 1;
    font-size: 13px;
    color: transparent;
    background: linear-gradient(to right, #757575 46px, #111 46px, #111 146px, #757575 146px);
    -webkit-background-clip: text;
    background-clip: text;
}

.address__actions {
    display: flex;
    gap: 24px;
}

.address__actions .icon-btn:first-child {
    margin-right: 8px;
}

.toolbar__right {
    display: flex;
    align-items: center;
    justify-content: flex-end;
    width: 229px;
    gap: 15px;
}

.profile {
    margin: 0 11px;
}

.more {
    position: relative;
    width: 18px;
    height: 22px;
}

.more__badge {
    position: absolute;
    right: -5px;
    bottom: 0;
    width: 11px;
    height: 11px;
    border-radius: 50%;
    background: #c8102e;
    color: #fff;
    font-size: 9px;
    line-height: 11px;
}

.copilot-btn {
    width: 36px;
    height: 32px;
    border-radius: 8px;
    background: #fff;
    box-shadow: 0 1px 4px rgba(0, 0, 0, 0.3);
}

/* Favorites bar */
.favorites {
    display: flex;
    align-items: center;
    flex: none;
    height: 32px;
    padding: 0 14px 0 12px;
    gap: 19px;
}

.fav {
    display: flex;
    align-items: center;
    gap: 6px;
    white-space: nowrap;
}

.sep--short {
    height: 16px;
}

.favorites__split {
    margin: 0 -4px;
}

.favorites__push {
    margin: 0 -4px 0 auto;
}

/* Page area */
.content {
    position: relative;
    display: flex;
    flex: 1;
    min-height: 0;
    gap: 3px;
    padding: 1px 3px 3px;
}

.gmail, .copilot {
    display: flex;
    flex-direction: column;
    border: 1px solid #e3e3ea;
    border-radius: 8px;
    overflow: hidden;
}

.gmail {
    flex: 1;
    min-width: 0;
    background: #f9fafe;
    color: #202124;
    font-family: Inter, Roboto, sans-serif;
    font-size: 10px;
}

.gmail__header {
    display: flex;
    align-items: center;
    flex: none;
    height: 49px;
    padding: 0 12px 2px 0;
}

.brand {
    display: flex;
    align-items: center;
    width: 192px;
    padding-left: 20px;
    gap: 8px;
}

.brand .icon-btn {
    margin-right: 7px;
}

.brand__name {
    font-family: Roboto, sans-serif;
    font-size: 17px;
    color: #5f6368;
}

.search {
    display: flex;
    align-items: center;
    flex: 0 1 540px;
    height: 36px;
    padding: 0 14px 0 12px;
    gap: 7px;
    border-radius: 18px;
    background: #e9eef6;
}

.search__input {
    flex: 1;
    font-family: Roboto, sans-serif;
    font-size: 12px;
}

.search__input::placeholder {
    color: #5f6368;
}

.gmail__apps {
    display: flex;
    align-items: center;
    gap: 16px;
    margin-left: auto;
}

.avatar {
    width: 24px;
    height: 24px;
    margin-left: 2px;
    border-radius: 50%;
    background: #00897b;
    color: #fff;
    font-size: 12px;
    font-weight: 500;
}

.gmail__body {
    display: flex;
    flex: 1;
    min-height: 0;
    padding-bottom: 12px;
}

/* Left rail */
.rail {
    display: flex;
    flex-direction: column;
    align-items: center;
    width: 54px;
    padding-top: 5px;
    color: #444746;
}

.compose {
    display: flex;
    align-items: center;
    justify-content: center;
    width: 42px;
    height: 42px;
    margin-bottom: 12px;
    border-radius: 12px;
    background: #c2e7ff;
}

.rail__item {
    position: relative;
    display: flex;
    align-items: center;
    justify-content: center;
    width: 24px;
    height: 24px;
    border-radius: 50%;
}

.rail__item--active {
    background: #d3e3fd;
    color: #001d35;
}

.rail__dot {
    position: absolute;
    top: 3px;
    right: 0;
    width: 6px;
    height: 6px;
    border-radius: 50%;
    background: #d3222a;
}

.rail__item--add {
    margin-top: 16px;
}

.rail__item--badge {
    margin-top: auto;
    background: #fff;
}

/* Mail list */
.mailbox {
    display: flex;
    flex-direction: column;
    flex: 1;
    min-width: 0;
    border-radius: 12px;
    background: #fff;
    overflow: hidden;
}

.mailbox__bar {
    display: flex;
    align-items: center;
    flex: none;
    height: 35px;
    padding: 0 28px 0 14px;
    color: #444746;
}

.mailbox__caret {
    margin: 0 20px 0 7px;
}

.mailbox__bar > .icon-btn {
    width: 14px;
    margin-right: 16px;
}

.check {
    display: block;
    width: 11px;
    height: 11px;
    appearance: none;
    border: 1px solid #b8babd;
    border-radius: 1px;
}

.check--dark {
    border-color: #444746;
}

.pager {
    display: flex;
    align-items: center;
    gap: 20px;
    margin-left: auto;
    font-family: Roboto, sans-serif;
    font-size: 9px;
}

.pager__prev {
    transform: rotate(180deg);
    color: #b8babd;
}

.pager__kbd {
    gap: 5px;
    margin-left: -4px;
}

.mailbox__scroll {
    display: flex;
    flex: 1;
    min-height: 0;
}

.mailbox__list {
    flex: 1;
    min-width: 0;
    margin-right: 3px;
    overflow: hidden;
}

.scrollbar {
    width: 9px;
}

.scrollbar__thumb {
    height: 178px;
    background: #c6c6c6;
}

.categories {
    display: flex;
    height: 42px;
}

.category {
    position: relative;
    display: flex;
    align-items: center;
    flex: 0 1 190px;
    padding-left: 13px;
    gap: 12px;
    text-align: left;
    white-space: nowrap;
    color: #444746;
}

.category__text {
    padding-top: 4px;
}

.category__name {
    display: block;
    font-family: Roboto, sans-serif;
    font-size: 11px;
    line-height: 14px;
    font-weight: 500;
}

.category__sub {
    display: block;
    font-family: Roboto, sans-serif;
    font-size: 9px;
    color: #96999d;
}

.category--active {
    color: #0b57d0;
}

.category--active::after {
    content: "";
    position: absolute;
    left: 6px;
    right: 8px;
    bottom: 0;
    height: 2px;
    background: #0b57d0;
}

.pill {
    display: inline-block;
    margin-left: 3px;
    padding: 0 3px;
    border-radius: 6px;
    color: #fff;
    font-size: 10px;
    line-height: 12px;
    font-weight: 700;
}

.pill--green {
    background: #188038;
}

.pill--orange {
    background: #d56e0c;
}

.mails {
    width: 100%;
    table-layout: fixed;
    border-collapse: separate;
    border-spacing: 0;
}

.mails__check {
    width: 36px;
}

.mails__star {
    width: 21px;
}

.mails__from {
    width: 150px;
}

.mails__date {
    width: 60px;
}

.mail {
    height: 30px;
    background: #f2f6fc;
}

.mail--tall {
    height: 60px;
}

.mail td {
    position: relative;
    padding-top: 7px;
    vertical-align: top;
    border-bottom: 1px solid #e6eaf2;
    white-space: nowrap;
}

.mail td:last-child {
    padding-right: 12px;
    text-align: right;
    font-family: Roboto, sans-serif;
    font-size: 9px;
    color: #5f6368;
}

.mail td:last-child[colspan] {
    text-align: left;
    font-family: inherit;
    font-size: 10px;
    color: #202124;
}

.mail .check {
    margin: 3px 0 0 14px;
}

.mail small {
    font-size: 9px;
    color: #777;
}

.star {
    display: block;
    margin-top: 3px;
    color: #b8babd;
}

.mail__line {
    overflow: hidden;
}

.mail__line span {
    color: #5f6368;
}

.mail__split {
    display: flex;
    justify-content: space-between;
    height: 16px;
}

.mail__actions {
    display: flex;
    align-items: center;
    color: #444746;
    gap: 14px;
}

.mail__actions .icon-btn {
    width: 16px;
}

.mail--hover td {
    border-top: 1px solid #d5d9e0;
    border-bottom: 1px solid #a9adb4;
    padding-top: 6px;
}

.mail--hover .star {
    color: #444746;
}

/* drag handle: two columns of dots */
.grip {
    position: absolute;
    left: 6px;
    top: 10px;
    width: 6px;
    height: 9px;
    background: radial-gradient(circle, #999 1px, transparent 1px) 0 0 / 3px 3px;
}

.mail--unread {
    background: #fff;
    font-weight: 700;
}

.mail--unread span, .mail--unread .chip {
    font-weight: 400;
}

.mail.mail--unread td:last-child {
    color: #202124;
}

.chip {
    display: inline-flex;
    align-items: center;
    height: 22px;
    min-width: 119px;
    margin: 5px 3px 0 2px;
    padding: 0 8px;
    gap: 6px;
    border: 1px solid #d3d6dc;
    border-radius: 11px;
    color: #5f6368;
}

/* Right add-on rail */
.addons {
    display: flex;
    flex-direction: column;
    align-items: center;
    width: 41px;
}

.addons__item {
    display: flex;
    align-items: center;
    justify-content: center;
    width: 41px;
    height: 42px;
}

.addons__line {
    width: 16px;
    height: 1px;
    margin: 11px 0 12px;
    background: #d5d7dc;
}

.addons__item--end {
    height: 20px;
    margin-top: auto;
}

/* Copilot pane */
.copilot {
    flex: 0 0 384px;
    background: #f8f4f1;
}

.copilot__header {
    display: flex;
    align-items: center;
    flex: none;
    height: 45px;
    padding: 0 16px 0 12px;
    gap: 18px;
    background: #f7f7f7;
    border-bottom: 1px solid #dedede;
}

.copilot__title {
    flex: 1;
    font-size: 13px;
    font-weight: 700;
}

.copilot__body {
    position: relative;
    display: flex;
    flex-direction: column;
    flex: 1;
    min-height: 0;
    padding: 0 12px 16px;
    background: linear-gradient(#f5f2ef, #f8f4f1 70px, #f8f4f1 80%, #e3e0dd);
    font-family: Lato, "Open Sans", sans-serif;
}

.copilot__tools {
    display: flex;
    align-items: center;
    flex: none;
    height: 44px;
    padding-left: 3px;
    gap: 17px;
}

.chat {
    flex: 1;
    min-height: 0;
    padding: 0 12px;
    overflow: hidden;
    color: #2b2725;
    font-size: 16px;
    line-height: 23px;
    -webkit-mask-image: linear-gradient(#000 calc(100% - 60px), rgba(0, 0, 0, 0.4));
    mask-image: linear-gradient(#000 calc(100% - 60px), rgba(0, 0, 0, 0.4));
}

.chat hr {
    margin: 47px 0 37px;
    border: none;
    border-top: 1px solid #c9c5c2;
}

.chat h2 {
    font-size: 22px;
    line-height: 26px;
    margin-bottom: 14px;
}

.chat p {
    margin-bottom: 11px;
    white-space: nowrap;
}

.jump {
    position: absolute;
    left: 50%;
    bottom: 150px;
    display: flex;
    align-items: center;
    justify-content: center;
    width: 40px;
    height: 40px;
    margin-left: -20px;
    border-radius: 14px;
    background: #fbf8f6;
    box-shadow: 0 2px 5px rgba(0, 0, 0, 0.12);
}

.composer {
    flex: none;
    padding: 14px 20px 8px 14px;
    border: 4px solid #fcf8f5;
    border-radius: 30px;
    background: linear-gradient(#fdfcfc, #fcfbfa 40%, #fdf8f5);
    box-shadow: 0 6px 20px rgba(0, 0, 0, 0.2), inset 0 0 0 1px #f1ebe6;
}

.composer__text {
    display: block;
    width: 100%;
    height: 20px;
    margin-bottom: 20px;
    padding-left: 4px;
    resize: none;
    overflow: hidden;
    font-size: 16px;
    line-height: 20px;
}

.composer__text::placeholder {
    color: #75706c;
}

.composer__row {
    display: flex;
    align-items: center;
    gap: 29px;
}

.mode {
    display: flex;
    align-items: center;
    width: 148px;
    height: 40px;
    padding: 0 13px 0 12px;
    border: 1px solid #eee8e4;
    border-radius: 14px;
}

.mode__select {
    flex: 1;
    appearance: none;
    font-size: 14px;
}

.composer__add {
    margin-left: auto;
}

.toast-corner {
    position: absolute;
    right: 0;
    bottom: 0;
    width: 61px;
    height: 30px;
    background: #4b4b4b;
}

/* Taskbar */
.taskbar {
    display: flex;
    flex: none;
    height: 40px;
    background: #1c1c1c;
    color: #fff;
}

.task {
    position: relative;
    display: flex;
    align-items: center;
    justify-content: center;
    width: 49px;
    flex: none;
}

.task--start {
    width: 48px;
}

.task--open::after {
    content: "";
    position: absolute;
    left: 5px;
    right: 4px;
    bottom: 0;
    height: 2px;
    background: #76b9ed;
}

.task--active {
    background: #4a4a4a;
}

.task--active::after {
    left: 0;
    right: 0;
}

.task-search {
    display: flex;
    align-items: center;
    flex: none;
    width: 288px;
    padding: 0 3px 0 10px;
    gap: 10px;
    background: #f0f0f0;
    border: 1px solid #c9c9c9;
}

.task-search__input {
    flex: 1;
    min-width: 0;
    font-size: 14px;
}

.task-search__input::placeholder {
    color: #333;
}

.zoom-logo {
    width: 24px;
    height: 24px;
    border-radius: 9px;
    background: #0b5cff;
    font-size: 12px;
    line-height: 22px;
    font-weight: 700;
}

.tray {
    display: flex;
    align-items: center;
    flex: 1;
    justify-content: flex-end;
    padding-right: 4px;
    background: linear-gradient(to right, transparent calc(100% - 120px), #17302f);
}

.weather {
    display: flex;
    align-items: center;
    gap: 8px;
    margin-right: 18px;
    font-size: 13px;
}

.tray__icon {
    display: flex;
    align-items: center;
    justify-content: center;
    width: 24px;
}

.clock {
    width: 66px;
    text-align: center;
    font-size: 11px;
    line-height: 18px;
}

.notify {
    position: relative;
    display: flex;
    align-items: center;
    justify-content: center;
    width: 48px;
    height: 40px;
    padding-right: 8px;
    border-right: 1px solid #4d5f5e;
}

.notify__count {
    position: absolute;
    right: 12px;
    bottom: 4px;
    width: 16px;
    height: 16px;
    border: 1px solid #aaa;
    border-radius: 50%;
    background: #2b3a3a;
    font-size: 10px;
    line-height: 14px;
}
```
